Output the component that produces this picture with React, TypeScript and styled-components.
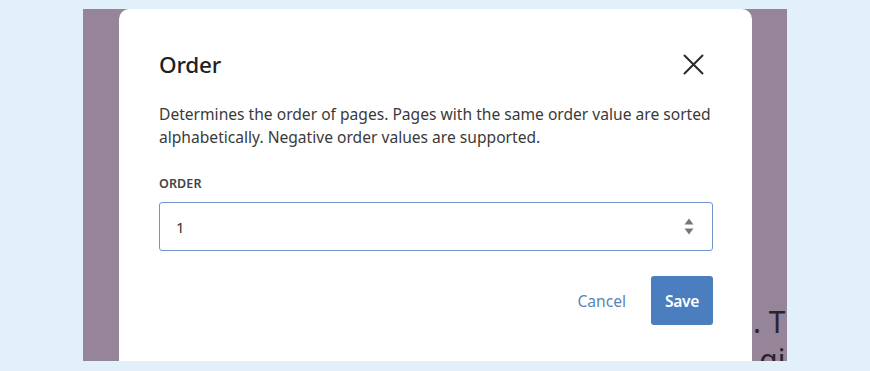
import React from "react";
import styled, { createGlobalStyle } from "styled-components";

const Global = createGlobalStyle`
  html, body { margin: 0; padding: 0; }
  body {
    background: #e1f0f9;
    font-family: "Noto Sans", "Open Sans", sans-serif;
    width: 870px;
    height: 371px;
    overflow: hidden;
  }
`;

const Stage = styled.div`
  padding: 9px 0 0 83px;
  height: 371px;
  box-sizing: border-box;
`;

const Frame = styled.div`
  position: relative;
  width: 704px;
  height: 352px;
  background: #968599;
  overflow: hidden;
`;

const PageText = styled.div`
  display: flex;
  flex-direction: column;
  align-items: flex-end;
  padding: 294px 0 0 0;
  margin-right: -17px;
  font-family: "Noto Sans", sans-serif;
  font-size: 30px;
  line-height: 38px;
  color: #2a2330;
  white-space: nowrap;
`;

const Overlay = styled.div`
  position: absolute;
  inset: 0;
  padding-left: 36px;
`;

const Dialog = styled.div`
  width: 633px;
  height: 400px;
  background: #ffffff;
  border-radius: 10px 10px 0 0;
  box-sizing: border-box;
  padding: 40px 40px 0 40px;
  display: flex;
  flex-direction: column;
`;

const Header = styled.div`
  display: flex;
  justify-content: space-between;
  align-items: center;
  height: 30px;
`;

const Title = styled.h2`
  margin: 0;
  font-size: 22.5px;
  font-weight: 500;
  color: #1f1f1f;
  letter-spacing: -0.2px;
`;

const CloseButton = styled.button`
  border: 0;
  background: none;
  padding: 0;
  margin-right: 8px;
  width: 21px;
  height: 21px;
  display: flex;
  cursor: pointer;
`;

const Description = styled.p`
  margin: 24px 0 0 0;
  font-size: 15.6px;
  line-height: 23px;
  color: #3a3a3a;
  letter-spacing: 0;
`;

const Label = styled.label`
  margin-top: 26px;
  font-size: 12.5px;
  font-weight: 600;
  color: #444;
  letter-spacing: 0.1px;
`;

const InputBox = styled.div`
  margin-top: 10px;
  height: 49px;
  width: 554px;
  box-sizing: border-box;
  border: 1.5px solid #7197cd;
  border-radius: 3px;
  display: flex;
  align-items: center;
  padding: 0 16px 0 16px;
`;

const Value = styled.span`
  flex: 1;
  font-size: 15px;
  color: #333;
`;

const Spinner = styled.div`
  display: flex;
  flex-direction: column;
  gap: 3px;
  margin-right: 2px;
`;

const Footer = styled.div`
  display: flex;
  justify-content: flex-end;
  align-items: center;
  gap: 25px;
  width: 554px;
  margin-top: 25px;
`;

const TextButton = styled.button`
  border: 0;
  background: none;
  padding: 0;
  font-family: inherit;
  font-size: 15.6px;
  color: #5a85b9;
  letter-spacing: 0;
  cursor: pointer;
`;

const PrimaryButton = styled.button`
  border: 0;
  width: 62px;
  height: 49px;
  border-radius: 3px;
  background: #4a7ebf;
  color: #fff;
  font-family: inherit;
  font-size: 15.6px;
  font-weight: 600;
  letter-spacing: -0.4px;
  cursor: pointer;
`;

export default function App() {
  return (
    <>
      <Global />
      <Stage>
        <Frame>
          <PageText>
            <span>s. Th</span>
            <span>gin</span>
          </PageText>
          <Overlay>
            <Dialog>
              <Header>
                <Title>Order</Title>
                <CloseButton aria-label="Close">
                  <svg width="21" height="21" viewBox="0 0 21 21">
                    <path d="M1.5 1.5 L19.5 19.5 M19.5 1.5 L1.5 19.5" stroke="#2b2b2b" strokeWidth="2" strokeLinecap="round" />
                  </svg>
                </CloseButton>
              </Header>
              <Description>
                Determines the order of pages. Pages with the same order value are sorted
                alphabetically. Negative order values are supported.
              </Description>
              <Label>ORDER</Label>
              <InputBox>
                <Value>1</Value>
                <Spinner>
                  <svg width="10" height="7" viewBox="0 0 10 7">
                    <path d="M5 0.5 L9.5 6.5 L0.5 6.5 Z" fill="#777" />
                  </svg>
                  <svg width="10" height="7" viewBox="0 0 10 7">
                    <path d="M0.5 0.5 L9.5 0.5 L5 6.5 Z" fill="#777" />
                  </svg>
                </Spinner>
              </InputBox>
              <Footer>
                <TextButton>Cancel</TextButton>
                <PrimaryButton>Save</PrimaryButton>
              </Footer>
            </Dialog>
          </Overlay>
        </Frame>
      </Stage>
    </>
  );
}
